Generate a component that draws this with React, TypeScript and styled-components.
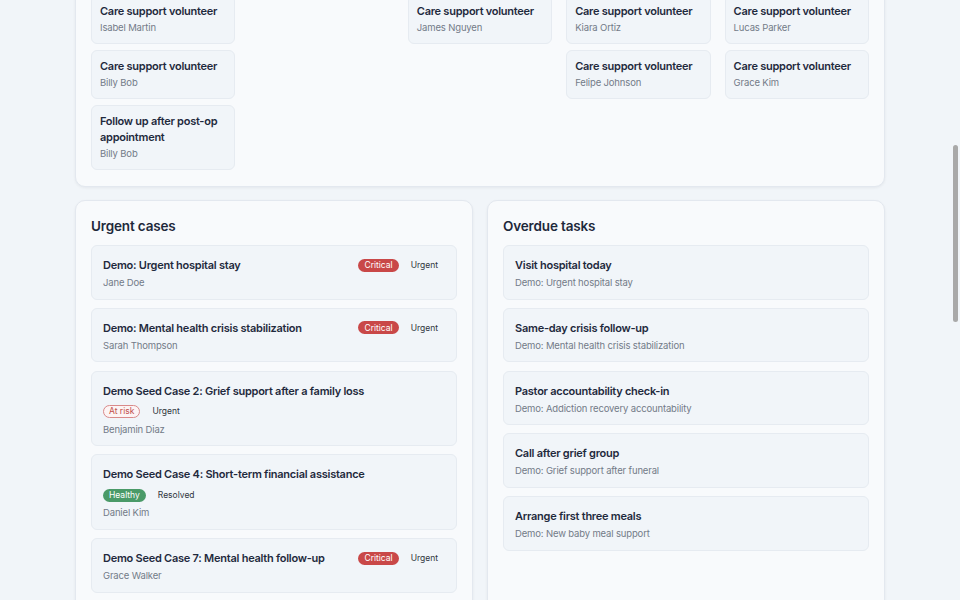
import React from "react";
import styled, { createGlobalStyle, css } from "styled-components";

const Global = createGlobalStyle`
  html, body {
    margin: 0;
    padding: 0;
    overflow: hidden;
    background: #f1f5f9;
    font-family: Inter, "Noto Sans", "Liberation Sans", sans-serif;
    -webkit-font-smoothing: antialiased;
  }
  * { box-sizing: border-box; }
`;

const Page = styled.main`
  width: 810px;
  margin: -21.5px auto 0;
  display: flex;
  flex-direction: column;
  gap: 13.5px;
`;

const Panel = styled.section`
  background: #f8fafc;
  border: 1px solid #e3e8ef;
  border-radius: 10px;
  box-shadow: 0 1px 3px rgba(15, 23, 42, 0.06);
  padding: 15px 15px 16px;
`;

const BoardGrid = styled.div`
  display: grid;
  grid-template-columns: repeat(5, 1fr);
  column-gap: 14px;
  align-items: start;
`;

const Column = styled.div`
  display: flex;
  flex-direction: column;
  gap: 6px;
`;

const MiniCard = styled.div`
  background: #f1f5f9;
  border: 1px solid #e6ebf1;
  border-radius: 6px;
  padding: 7px 8px 8.5px;
  display: flex;
  flex-direction: column;
  gap: 2.5px;
`;

const CardTitle = styled.div`
  font-size: 11px;
  font-weight: 600;
  line-height: 16px;
  color: #1f2a3d;
  letter-spacing: -0.25px;
`;

const CardSub = styled.div`
  font-size: 9.5px;
  line-height: 13px;
  color: #737b88;
  letter-spacing: -0.15px;
`;

const TwoCols = styled.div`
  display: grid;
  grid-template-columns: 1fr 1fr;
  gap: 14px;
  align-items: stretch;
`;

const SectionTitle = styled.h2`
  margin: 0 0 9px;
  font-size: 13.5px;
  line-height: 20px;
  font-weight: 600;
  color: #1e293b;
  letter-spacing: -0.15px;
`;

const List = styled.div`
  display: flex;
  flex-direction: column;
  gap: 8.25px;
`;

const ItemCard = styled.div`
  background: #f1f5f9;
  border: 1px solid #e6ebf1;
  border-radius: 6px;
  padding: 11px 11px 9.5px;
  display: flex;
  flex-direction: column;
  gap: 3px;
`;

const ItemHead = styled.div`
  display: flex;
  flex-wrap: wrap;
  align-items: center;
  justify-content: space-between;
  row-gap: 5px;
  column-gap: 12px;
`;

const Badges = styled.div`
  display: flex;
  align-items: center;
  min-height: 16px;
  gap: 5px;
`;

type Tone = "critical" | "risk" | "healthy" | "plain";

const Badge = styled.span<{ $tone: Tone }>`
  display: inline-flex;
  align-items: center;
  height: 13px;
  padding: 0 5px;
  border-radius: 7px;
  font-size: 8.5px;
  line-height: 1;
  border: 1px solid transparent;
  ${({ $tone }) =>
    $tone === "critical"
      ? css`
          background: #c94848;
          color: #fff;
        `
      : $tone === "risk"
      ? css`
          background: #fdf4f4;
          border-color: #d98a8a;
          color: #c0504d;
        `
      : $tone === "healthy"
      ? css`
          background: #4a9a68;
          color: #fff;
        `
      : css`
          background: transparent;
          color: #303640;
          padding: 0 6px;
        `}
`;

const ScrollThumb = styled.div`
  position: fixed;
  right: 2px;
  top: 145px;
  width: 5px;
  height: 177px;
  border-radius: 3px;
  background: #a9a9a9;
`;

const board: { title: string; name: string }[][] = [
  [
    { title: "Care support volunteer", name: "Isabel Martin" },
    { title: "Care support volunteer", name: "Billy Bob" },
    { title: "Follow up after post-op appointment", name: "Billy Bob" },
  ],
  [],
  [{ title: "Care support volunteer", name: "James Nguyen" }],
  [
    { title: "Care support volunteer", name: "Kiara Ortiz" },
    { title: "Care support volunteer", name: "Felipe Johnson" },
  ],
  [
    { title: "Care support volunteer", name: "Lucas Parker" },
    { title: "Care support volunteer", name: "Grace Kim" },
  ],
];

const urgent: { title: string; name: string; health: Tone; healthLabel: string; status: string }[] = [
  { title: "Demo: Urgent hospital stay", name: "Jane Doe", health: "critical", healthLabel: "Critical", status: "Urgent" },
  { title: "Demo: Mental health crisis stabilization", name: "Sarah Thompson", health: "critical", healthLabel: "Critical", status: "Urgent" },
  { title: "Demo Seed Case 2: Grief support after a family loss", name: "Benjamin Diaz", health: "risk", healthLabel: "At risk", status: "Urgent" },
  { title: "Demo Seed Case 4: Short-term financial assistance", name: "Daniel Kim", health: "healthy", healthLabel: "Healthy", status: "Resolved" },
  { title: "Demo Seed Case 7: Mental health follow-up", name: "Grace Walker", health: "critical", healthLabel: "Critical", status: "Urgent" },
];

const overdue = [
  { title: "Visit hospital today", sub: "Demo: Urgent hospital stay" },
  { title: "Same-day crisis follow-up", sub: "Demo: Mental health crisis stabilization" },
  { title: "Pastor accountability check-in", sub: "Demo: Addiction recovery accountability" },
  { title: "Call after grief group", sub: "Demo: Grief support after funeral" },
  { title: "Arrange first three meals", sub: "Demo: New baby meal support" },
];

export default function App() {
  return (
    <>
      <Global />
      <Page>
        <Panel>
          <BoardGrid>
            {board.map((col, i) => (
              <Column key={i}>
                {col.map((c, j) => (
                  <MiniCard key={j}>
                    <CardTitle>{c.title}</CardTitle>
                    <CardSub>{c.name}</CardSub>
                  </MiniCard>
                ))}
              </Column>
            ))}
          </BoardGrid>
        </Panel>
        <TwoCols>
          <Panel>
            <SectionTitle>Urgent cases</SectionTitle>
            <List>
              {urgent.map((u, i) => (
                <ItemCard key={i}>
                  <ItemHead>
                    <CardTitle>{u.title}</CardTitle>
                    <Badges>
                      <Badge $tone={u.health}>{u.healthLabel}</Badge>
                      <Badge $tone="plain">{u.status}</Badge>
                    </Badges>
                  </ItemHead>
                  <CardSub>{u.name}</CardSub>
                </ItemCard>
              ))}
            </List>
          </Panel>
          <Panel>
            <SectionTitle>Overdue tasks</SectionTitle>
            <List>
              {overdue.map((t, i) => (
                <ItemCard key={i}>
                  <CardTitle>{t.title}</CardTitle>
                  <CardSub>{t.sub}</CardSub>
                </ItemCard>
              ))}
            </List>
          </Panel>
        </TwoCols>
      </Page>
      <ScrollThumb />
    </>
  );
}
